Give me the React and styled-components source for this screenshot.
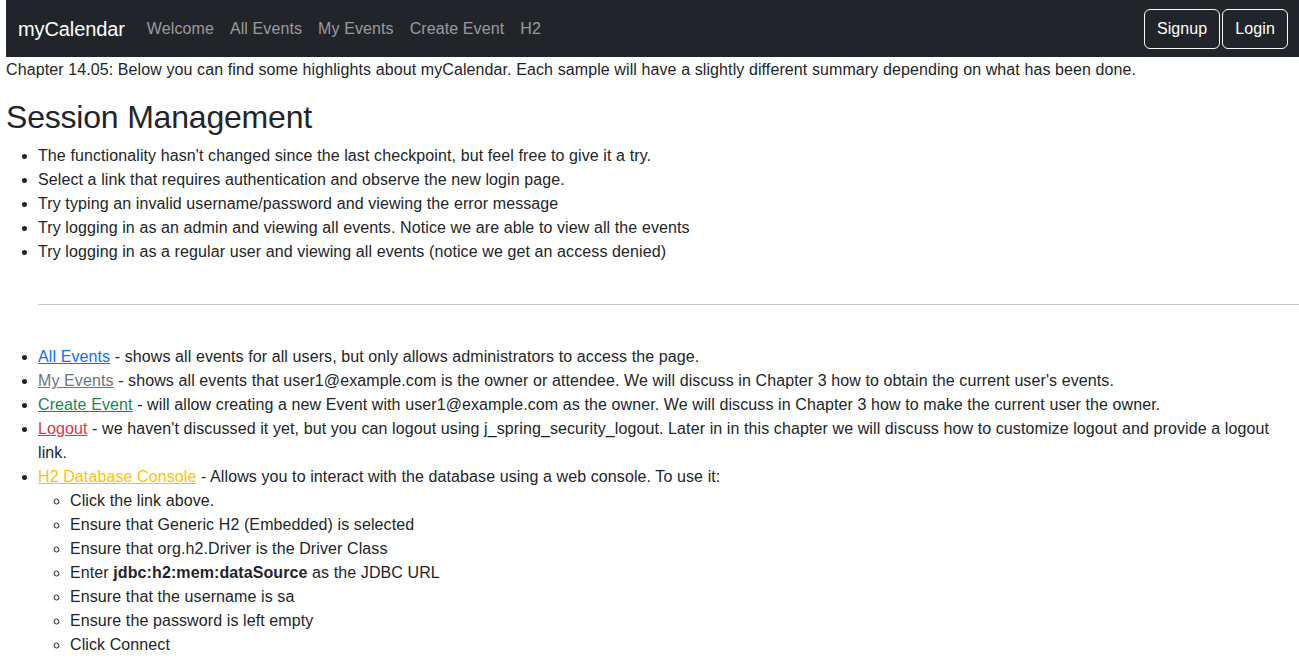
import styled, { createGlobalStyle } from "styled-components";

const GlobalStyle = createGlobalStyle`
  body {
    margin: 0;
    font-family: "Liberation Sans", Arial, sans-serif;
    font-size: 16px;
    line-height: 24px;
    letter-spacing: 0.1px;
    color: #212529;
    background: #fff;
  }
`

const Page = styled.div`
  padding-left: 6px;
`

const Navbar = styled.nav`
  height: 57px;
  background: #212529;
  display: flex;
  align-items: center;
  padding: 0 11px 0 12px;
`

const Brand = styled.a`
  color: #fff;
  font-size: 20px;
  line-height: 30px;
  letter-spacing: -0.1px;
  margin-right: 14px;
  text-decoration: none;
`

const NavLinks = styled.div`
  display: flex;
  flex: 1;
`

const NavLink = styled.a`
  color: rgba(255, 255, 255, 0.55);
  padding: 8px;
  text-decoration: none;
`

const Buttons = styled.div`
  display: flex;
  gap: 2px;
`

const OutlineButton = styled.button`
  font-family: inherit;
  font-size: 16px;
  line-height: 24px;
  letter-spacing: inherit;
  color: #fff;
  background: transparent;
  border: 1px solid #f8f9fa;
  border-radius: 6px;
  padding: 7px 12px;
`

const Intro = styled.div`
  margin-top: 1px;
  line-height: 24px;
`

const Title = styled.h2`
  font-size: 32px;
  font-weight: 500;
  line-height: 1.2;
  letter-spacing: -0.2px;
  margin: 16px 0 8px;
`

const List = styled.ul`
  margin: 0;
  padding-left: 32px;
  list-style-type: ${(p) => (p.$nested ? "circle" : "disc")};
`

const Divider = styled.hr`
  margin: 40px 0 40px 32px;
  border: 0;
  border-top: 1px solid #212529;
  opacity: 0.25;
`

const Link = styled.a`
  color: ${(p) => p.$color};
  text-decoration: underline;
`

const highlights = [
  "The functionality hasn't changed since the last checkpoint, but feel free to give it a try.",
  "Select a link that requires authentication and observe the new login page.",
  "Try typing an invalid username/password and viewing the error message",
  "Try logging in as an admin and viewing all events. Notice we are able to view all the events",
  "Try logging in as a regular user and viewing all events (notice we get an access denied)",
]

export default function App() {
  return (
    <>
      <GlobalStyle />
      <Page>
        <Navbar>
          <Brand href="#">myCalendar</Brand>
          <NavLinks>
            <NavLink href="#">Welcome</NavLink>
            <NavLink href="#">All Events</NavLink>
            <NavLink href="#">My Events</NavLink>
            <NavLink href="#">Create Event</NavLink>
            <NavLink href="#">H2</NavLink>
          </NavLinks>
          <Buttons>
            <OutlineButton>Signup</OutlineButton>
            <OutlineButton>Login</OutlineButton>
          </Buttons>
        </Navbar>

        <Intro>
          Chapter 14.05: Below you can find some highlights about myCalendar. Each sample will have a slightly different summary depending on what has been done.
        </Intro>
        <Title>Session Management</Title>
        <List>
          {highlights.map((h) => (
            <li key={h}>{h}</li>
          ))}
        </List>

        <Divider />

        <List>
          <li>
            <Link href="#" $color="#0d6efd">All Events</Link> - shows all events for all users, but only allows administrators to access the page.
          </li>
          <li>
            <Link href="#" $color="#6c757d">My Events</Link> - shows all events that user1@example.com is the owner or attendee. We will discuss in Chapter 3 how to obtain the current user's events.
          </li>
          <li>
            <Link href="#" $color="#198754">Create Event</Link> - will allow creating a new Event with user1@example.com as the owner. We will discuss in Chapter 3 how to make the current user the owner.
          </li>
          <li>
            <Link href="#" $color="#dc3545">Logout</Link> - we haven't discussed it yet, but you can logout using j_spring_security_logout. Later in in this chapter we will discuss how to customize logout and provide a logout link.
          </li>
          <li>
            <Link href="#" $color="#ffc107">H2 Database Console</Link> - Allows you to interact with the database using a web console. To use it:
            <List $nested>
              <li>Click the link above.</li>
              <li>Ensure that Generic H2 (Embedded) is selected</li>
              <li>Ensure that org.h2.Driver is the Driver Class</li>
              <li>Enter <b>jdbc:h2:mem:dataSource</b> as the JDBC URL</li>
              <li>Ensure that the username is sa</li>
              <li>Ensure the password is left empty</li>
              <li>Click Connect</li>
            </List>
          </li>
        </List>
      </Page>
    </>
  )
}
